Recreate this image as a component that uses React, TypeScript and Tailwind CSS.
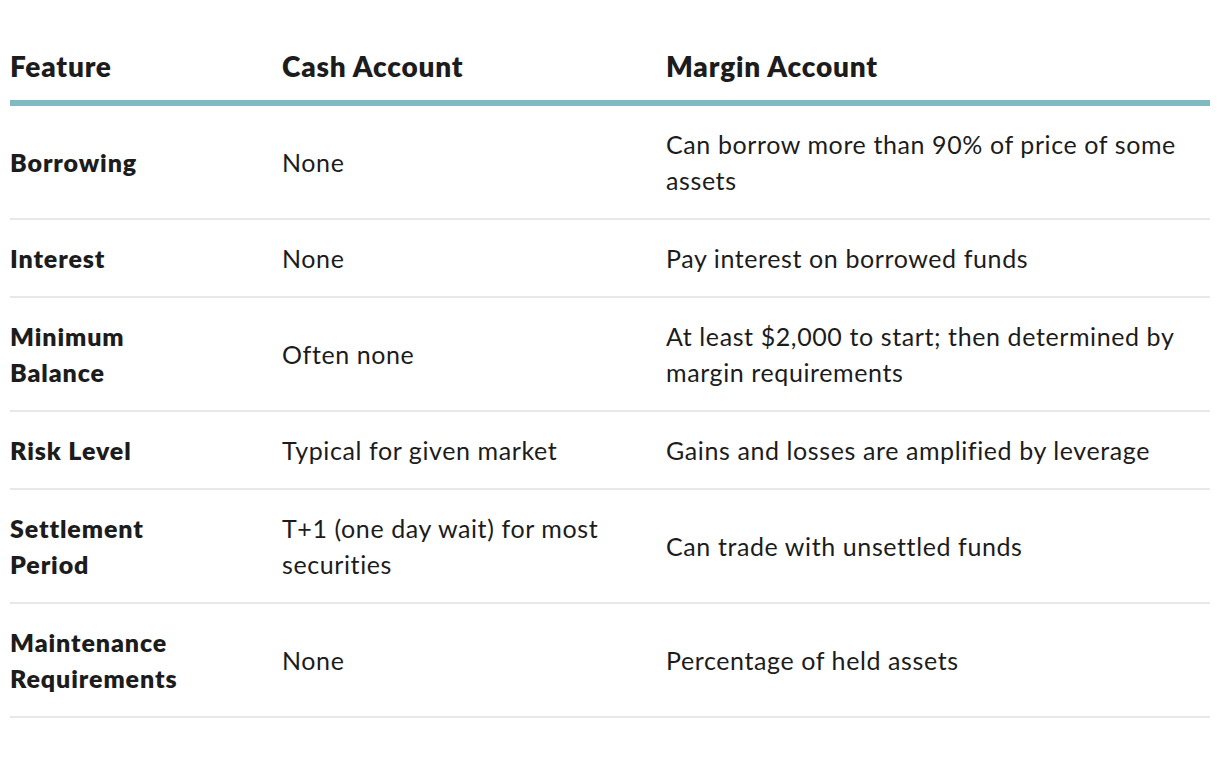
const rows: [string, string, string][] = [
  ["Borrowing", "None", "Can borrow more than 90% of price of some assets"],
  ["Interest", "None", "Pay interest on borrowed funds"],
  ["Minimum Balance", "Often none", "At least $2,000 to start; then determined by margin requirements"],
  ["Risk Level", "Typical for given market", "Gains and losses are amplified by leverage"],
  ["Settlement Period", "T+1 (one day wait) for most securities", "Can trade with unsettled funds"],
  ["Maintenance Requirements", "None", "Percentage of held assets"],
];

export default function App() {
  return (
    <div className="min-h-[768px] w-[1220px] bg-white px-[10px] text-[#1c1c1c] font-['Lato','Source_Sans_Pro',sans-serif]">
      <div className="grid grid-cols-[272px_384px_544px] border-b-[6px] border-[#7fbac3] pt-[48px] pb-[16px] text-[28px] font-extrabold leading-[36px] tracking-[0.8px]">
        <div>Feature</div>
        <div>Cash Account</div>
        <div>Margin Account</div>
      </div>
      {rows.map(([feature, cash, margin]) => (
        <div
          key={feature}
          className="grid grid-cols-[272px_384px_544px] items-center border-b-2 border-[#e8e8e8] py-[20px] text-[25px] leading-[36px] tracking-[0.6px]"
        >
          <div className="pr-[80px] font-extrabold tracking-[0.9px]">{feature}</div>
          <div className="pr-[40px]">{cash}</div>
          <div className="pr-[6px]">{margin}</div>
        </div>
      ))}
    </div>
  );
}
